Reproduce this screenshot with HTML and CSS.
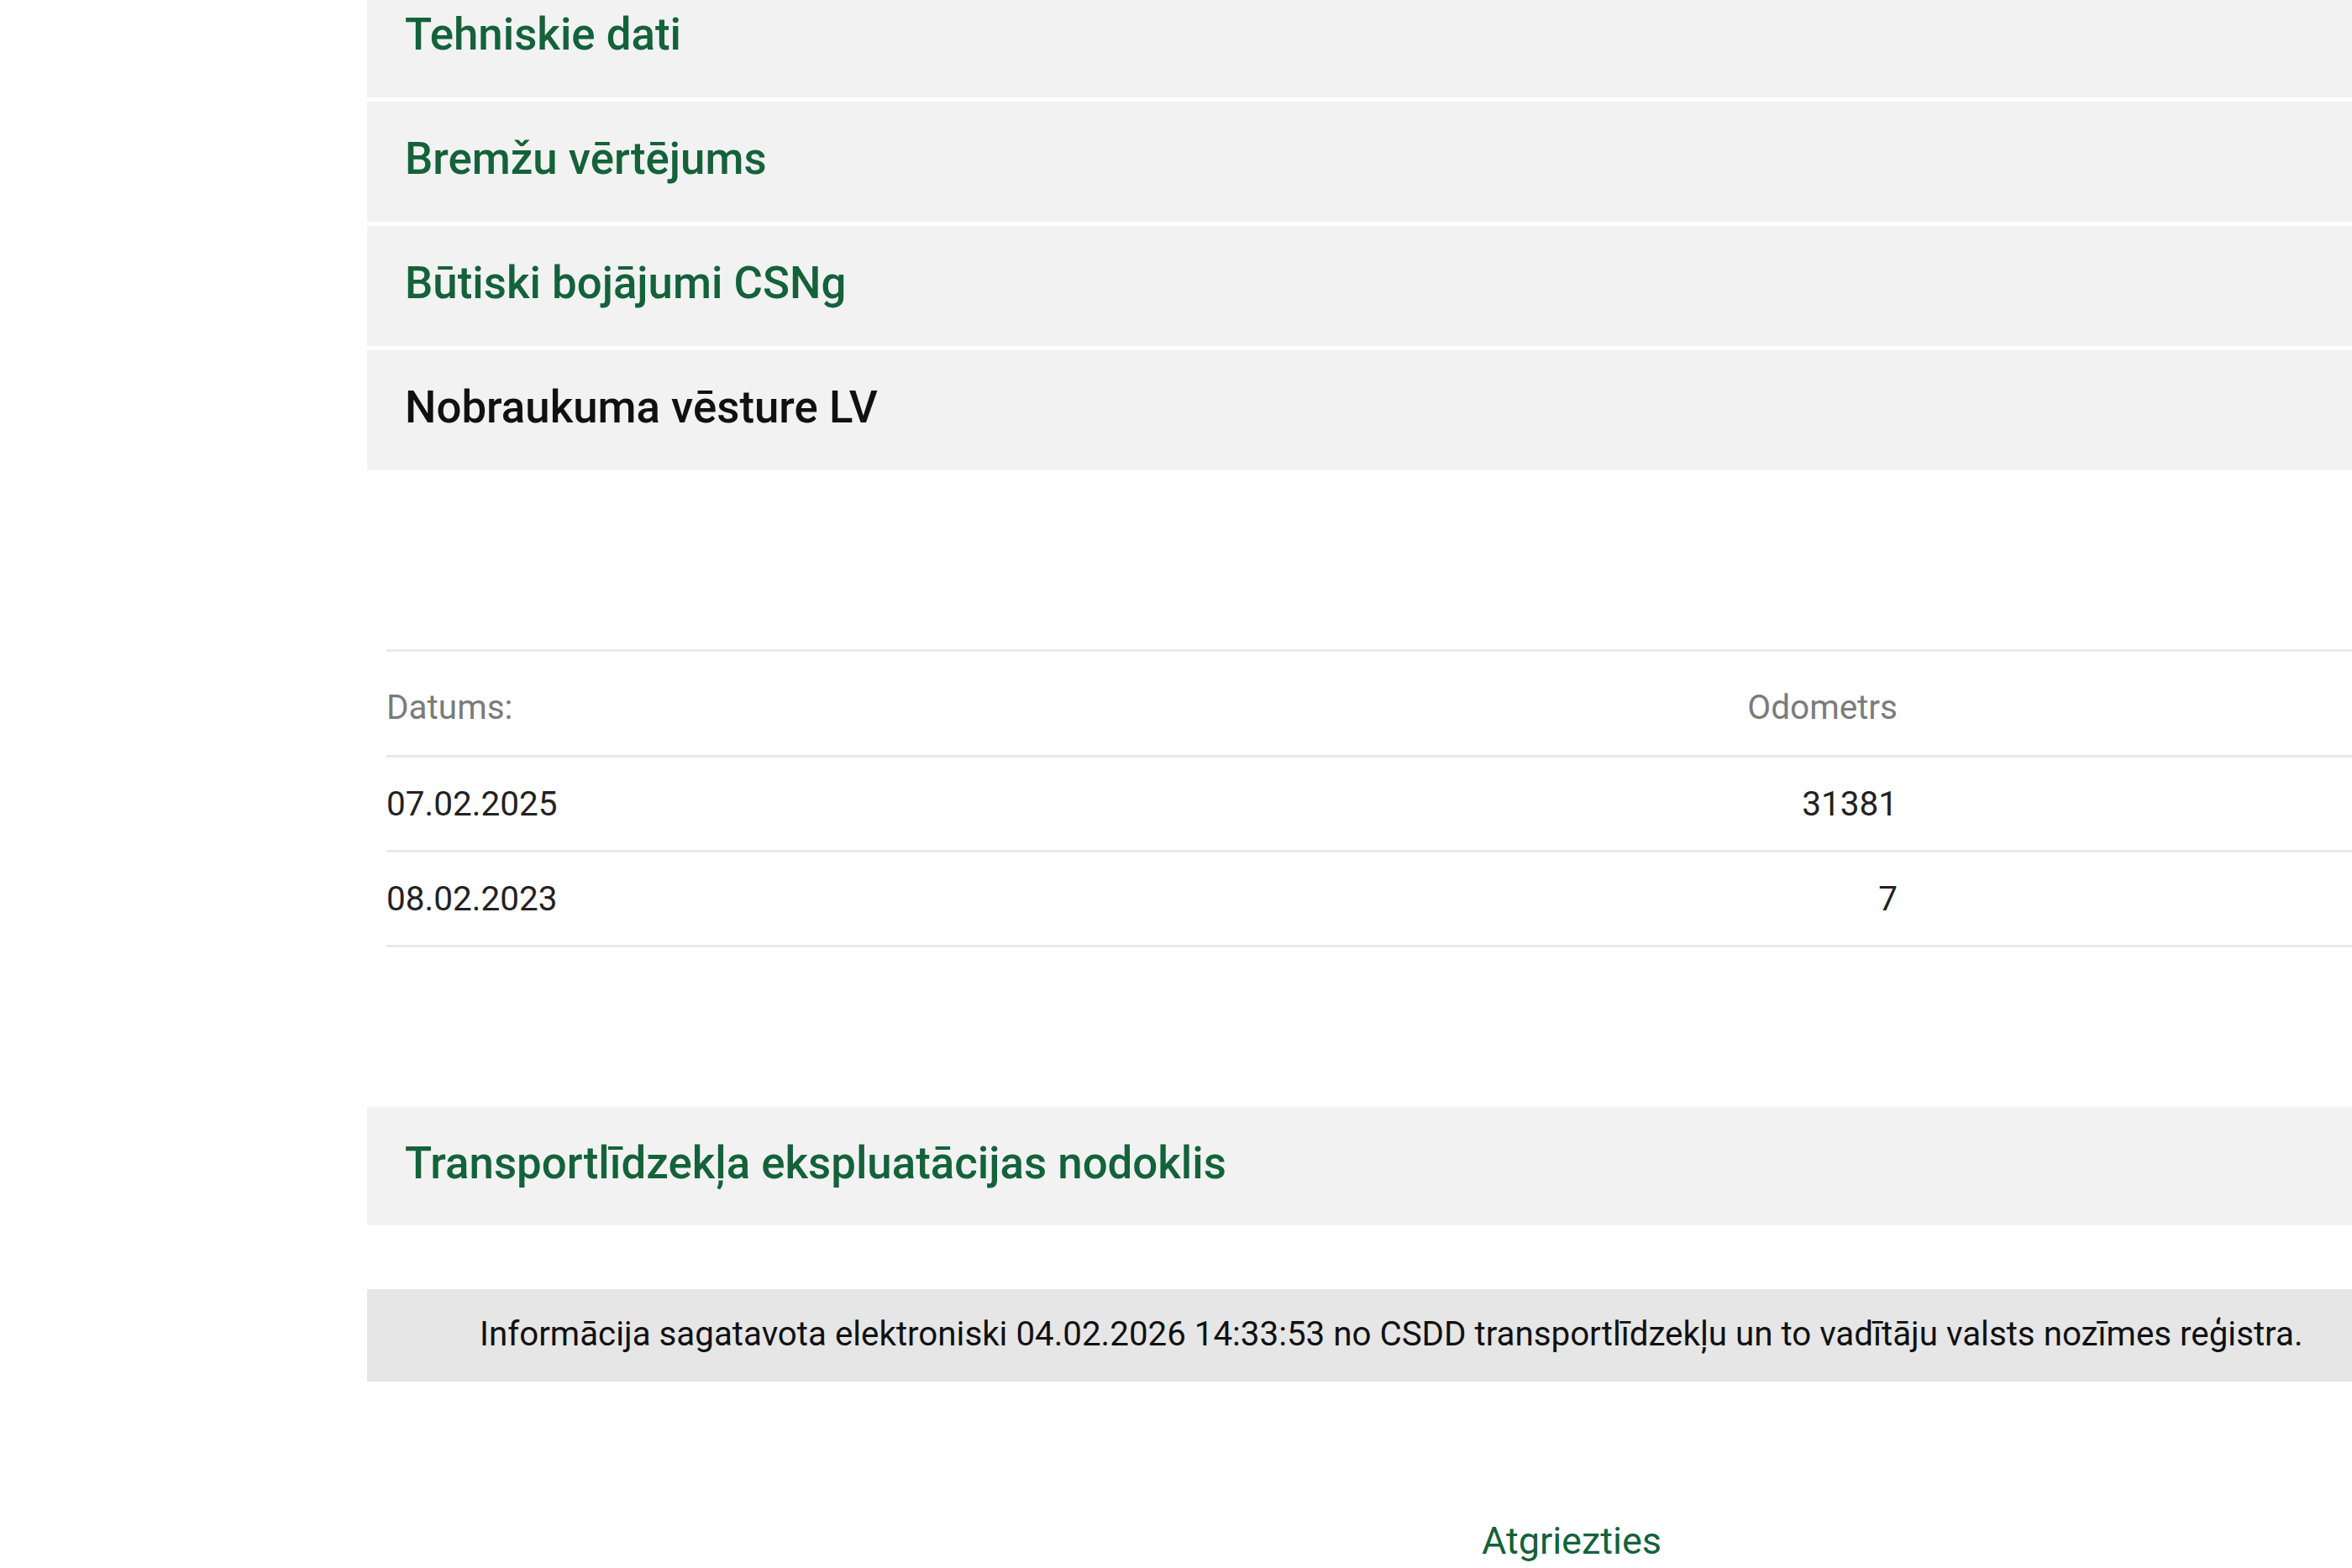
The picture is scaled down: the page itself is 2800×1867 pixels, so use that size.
FILE: index.html
```html
<!DOCTYPE html>
<html lang="lv">
<head>
<meta charset="utf-8">
<title>Transportlīdzekļa dati</title>
<link rel="stylesheet" href="styles.css">
</head>
<body>
<div class="page">
  <div class="panel"><a class="panel-title" href="#">Tehniskie dati</a></div>
  <div class="panel"><a class="panel-title" href="#">Bremžu vērtējums</a></div>
  <div class="panel"><a class="panel-title" href="#">Būtiski bojājumi CSNg</a></div>
  <div class="panel"><span class="panel-title active">Nobraukuma vēsture LV</span></div>

  <div class="history">
    <table class="odo-table">
      <thead>
        <tr>
          <th class="col-date">Datums:</th>
          <th class="col-odo">Odometrs</th>
          <th class="col-fill"></th>
        </tr>
      </thead>
      <tbody>
        <tr>
          <td class="col-date">07.02.2025</td>
          <td class="col-odo">31381</td>
          <td class="col-fill"></td>
        </tr>
        <tr>
          <td class="col-date">08.02.2023</td>
          <td class="col-odo">7</td>
          <td class="col-fill"></td>
        </tr>
      </tbody>
    </table>
  </div>

  <div class="panel panel-tax"><a class="panel-title" href="#">Transportlīdzekļa ekspluatācijas nodoklis</a></div>

  <div class="info-bar">Informācija sagatavota elektroniski 04.02.2026 14:33:53 no CSDD transportlīdzekļu un to vadītāju valsts nozīmes reģistra.</div>

  <div class="back"><a class="back-link" href="#">Atgriezties</a></div>
</div>
</body>
</html>
```
FILE: styles.css
```css
html, body {
  margin: 0;
  padding: 0;
  overflow: hidden;
  background: #ffffff;
}

body {
  font-family: Roboto, "Liberation Sans", Arial, sans-serif;
  color: #222222;
}

.page {
  margin-left: 437px;
  margin-top: -27px;
  width: 2868px;
  display: flex;
  flex-direction: column;
}

.panel {
  background: #f2f2f2;
  height: 143px;
  margin-bottom: 5px;
  display: flex;
  align-items: center;
  padding-left: 45px;
  padding-bottom: 7px;
  box-sizing: border-box;
}

.panel-title {
  font-size: 52.8px;
  font-weight: 500;
  color: #14623a;
  text-decoration: none;
}

.panel-title.active {
  color: #111111;
}

.history {
  padding-top: 208px;
  padding-left: 23px;
}

.odo-table {
  border-collapse: collapse;
  width: 2845px;
  font-size: 40.5px;
}

.odo-table thead tr {
  border-top: 3px solid #e9e9e9;
}

.odo-table tr {
  border-bottom: 3px solid #e9e9e9;
}

.odo-table th {
  height: 126px;
  padding: 8px 0 0 0;
  font-weight: 400;
  color: #7b7b7b;
  vertical-align: middle;
  box-sizing: border-box;
}

.odo-table td {
  height: 110px;
  padding: 0;
  color: #222222;
  vertical-align: middle;
}

.col-date {
  width: 1500px;
  text-align: left;
}

.col-odo {
  width: 299px;
  text-align: right;
}

.col-fill {
  width: auto;
}

.panel-tax {
  margin-top: 190px;
  height: 141px;
  margin-bottom: 0;
}

.info-bar {
  margin-top: 76px;
  background: #e6e6e6;
  height: 110px;
  line-height: 108px;
  padding-left: 134px;
  font-size: 40.3px;
  color: #111111;
  white-space: nowrap;
}

.back {
  text-align: center;
  margin-top: 160px;
}

.back-link {
  font-size: 45px;
  color: #14623a;
  text-decoration: none;
  line-height: 60px;
}
```
